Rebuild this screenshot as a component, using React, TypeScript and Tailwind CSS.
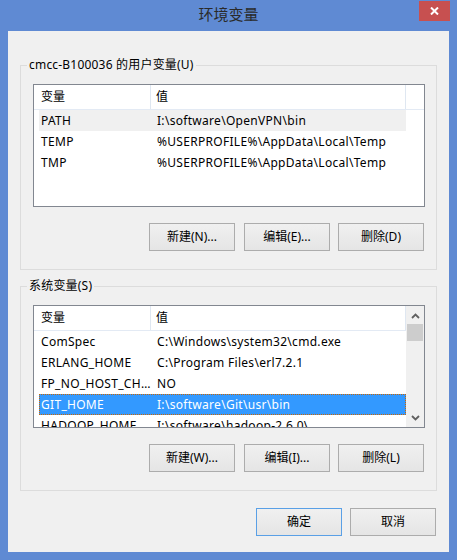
import React from "react";

type Row = { name: string; value: string; state?: "hover" | "selected" };

const userRows: Row[] = [
  { name: "PATH", value: "I:\\software\\OpenVPN\\bin", state: "hover" },
  { name: "TEMP", value: "%USERPROFILE%\\AppData\\Local\\Temp" },
  { name: "TMP", value: "%USERPROFILE%\\AppData\\Local\\Temp" },
];

const sysRows: Row[] = [
  { name: "ComSpec", value: "C:\\Windows\\system32\\cmd.exe" },
  { name: "ERLANG_HOME", value: "C:\\Program Files\\erl7.2.1" },
  { name: "FP_NO_HOST_CHECK", value: "NO" },
  { name: "GIT_HOME", value: "I:\\software\\Git\\usr\\bin", state: "selected" },
  { name: "HADOOP_HOME", value: "I:\\software\\hadoop-2.6.0\\" },
];

function Chevron({ up }: { up?: boolean }) {
  return (
    <svg width="9" height="6" viewBox="0 0 9 6">
      <polyline
        points={up ? "1,5 4.5,1.5 8,5" : "1,1 4.5,4.5 8,1"}
        fill="none"
        stroke="#606060"
        strokeWidth="1.8"
      />
    </svg>
  );
}

function Btn({ label, primary, className }: { label: string; primary?: boolean; className?: string }) {
  return (
    <div
      className={
        "w-[86px] h-[28px] flex items-center justify-center border bg-gradient-to-b from-[#f0f0f0] to-[#e5e5e5] text-black " +
        (primary ? "border-[#5aa0e6] " : "border-[#acacac] ") +
        (className ?? "")
      }
    >
      {label}
    </div>
  );
}

function VarList({ rows, scroll }: { rows: Row[]; scroll?: boolean }) {
  return (
    <div className="w-[392px] h-[123px] border border-[#828790] bg-white flex overflow-hidden">
      <div className="w-[372px] flex flex-col">
        <div className="h-[25px] flex border-b border-[#e3eaf4] shrink-0">
          <div className="w-[117px] border-r border-[#dfe7f1] pl-[7px] flex items-center text-black">变量</div>
          <div className="w-[255px] border-r border-[#dfe7f1] pl-[5px] flex items-center text-black">值</div>
        </div>
        <div className="flex flex-col tracking-[0.3px]">
          {rows.map((r) => (
            <div
              key={r.name}
              className={
                "ml-[5px] w-[367px] h-[21px] flex items-center shrink-0 " +
                (r.state === "selected"
                  ? "bg-[#3399ff] text-white border border-dotted border-[#cc6600]"
                  : r.state === "hover"
                  ? "bg-[#f0f0f0] text-black border border-transparent"
                  : "text-black border border-transparent")
              }
            >
              <div className="w-[111px] shrink-0 pl-[1px] whitespace-nowrap overflow-hidden text-ellipsis">{r.name}</div>
              <div className="pl-[6px] whitespace-nowrap">{r.value}</div>
            </div>
          ))}
        </div>
      </div>
      {scroll ? (
        <div className="w-[18px] bg-[#f0f0f0] flex flex-col">
          <div className="h-[17px] flex items-center justify-center pt-[2px]">
            <Chevron up />
          </div>
          <div className="flex-1 flex flex-col">
            <div className="mt-[1px] mx-[1px] h-[17px] bg-[#cdcdcd]" />
          </div>
          <div className="h-[17px] flex items-center justify-center pb-[2px]">
            <Chevron />
          </div>
        </div>
      ) : (
        <div className="w-[18px] flex flex-col">
          <div className="h-[25px] border-b border-[#e3eaf4]" />
        </div>
      )}
    </div>
  );
}

function Group({ label, rows, scroll, btns, className }: { label: string; rows: Row[]; scroll?: boolean; btns: string[]; className?: string }) {
  return (
    <div className={"w-[417px] h-[205px] border border-[#dcdcdc] flex flex-col " + (className ?? "")}>
      <div className="-mt-[9px] ml-[6px] px-[2px] w-fit h-[16px] leading-[16px] bg-[#f0f0f0] text-black tracking-[0.2px]">{label}</div>
      <div className="mt-[11px] ml-[12px]">
        <VarList rows={rows} scroll={scroll} />
      </div>
      <div className="mt-[16px] pr-[12px] flex justify-end">
        <Btn label={btns[0]} className="mr-[9px]" />
        <Btn label={btns[1]} className="mr-[8px]" />
        <Btn label={btns[2]} />
      </div>
    </div>
  );
}

export default function App() {
  return (
    <div className="w-[457px] h-[560px] bg-[#5f8ad3] flex flex-col font-['Noto_Sans','Noto_Sans_CJK_SC',sans-serif] text-[12px] leading-[16px]">
      <div className="h-[31px] grid grid-cols-[1fr_auto_1fr] shrink-0">
        <div />
        <div className="text-[15px] leading-[31px] text-[#2a2a2a] -mt-[1px]">环境变量</div>
        <div className="flex justify-end items-start pr-[7px] pt-[1px]">
          <div className="w-[31px] h-[20px] bg-[#c75050] flex items-center justify-center">
            <svg width="9" height="8" viewBox="0 0 9 8">
              <path d="M1 0.5 L8 7.5 M8 0.5 L1 7.5" stroke="#ffffff" strokeWidth="2" fill="none" />
            </svg>
          </div>
        </div>
      </div>
      <div className="mx-[8px] mb-[8px] flex-1 bg-[#f0f0f0] flex flex-col px-[12px]">
        <Group
          className="mt-[34px]"
          label="cmcc-B100036 的用户变量(U)"
          rows={userRows}
          btns={["新建(N)...", "编辑(E)...", "删除(D)"]}
        />
        <Group
          className="mt-[16px]"
          label="系统变量(S)"
          rows={sysRows}
          scroll
          btns={["新建(W)...", "编辑(I)...", "删除(L)"]}
        />
        <div className="mt-[17px] pr-[1px] flex justify-end">
          <Btn label="确定" primary className="mr-[8px]" />
          <Btn label="取消" />
        </div>
      </div>
    </div>
  );
}
